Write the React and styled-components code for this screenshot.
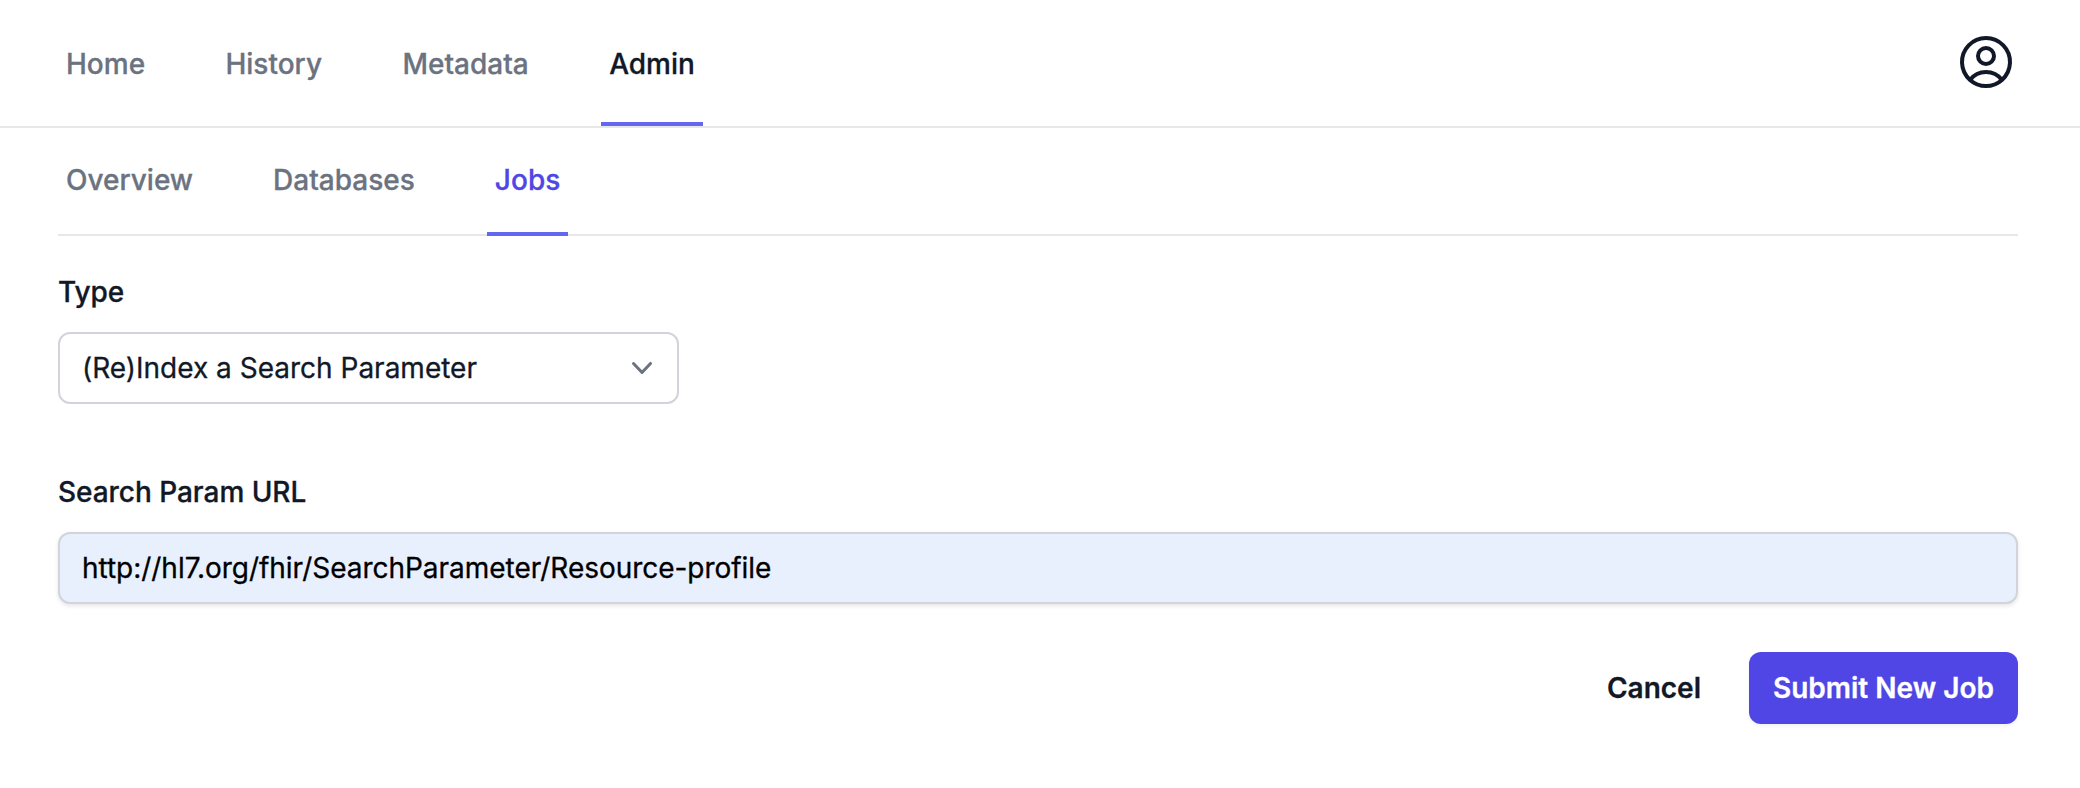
import React from "react";
import styled, { createGlobalStyle } from "styled-components";

const GlobalStyle = createGlobalStyle`
  *, *::before, *::after { box-sizing: border-box; }
  body {
    margin: 0;
    background: #fff;
    color: #111827;
    font-family: Inter, "Liberation Sans", sans-serif;
    font-size: 28px;
    line-height: 48px;
    -webkit-font-smoothing: antialiased;
    -webkit-text-stroke: 0.3px currentColor;
  }
`;

const Page = styled.div`
  min-height: 788px;
`;

const Header = styled.header`
  display: flex;
  justify-content: space-between;
  height: 128px;
  padding: 0 62px 0 58px;
  border-bottom: 2px solid #e5e7eb;
`;

const TabList = styled.nav`
  display: flex;
  gap: ${(p) => p.$gap || "64px"};
`;

const Tab = styled.a`
  display: flex;
  align-items: center;
  padding: 6px 8px 0;
  border-bottom: 4px solid ${(p) => (p.$active ? "#6366f1" : "transparent")};
  color: ${(p) => (p.$active ? "#111827" : "#6b7280")};
  font-weight: 500;
  line-height: 40px;
  white-space: nowrap;
  text-decoration: none;
`;

const ProfileButton = styled.button`
  align-self: flex-start;
  display: flex;
  margin: 30px 0 0;
  padding: 0;
  border: 0;
  background: none;
  color: #111827;
`;

const Main = styled.main`
  padding: 0 62px 0 58px;
`;

const SubTabList = styled(TabList)`
  height: 108px;
  box-shadow: inset 0 -2px 0 #e5e7eb;
`;

const SubTab = styled(Tab)`
  padding: 32px 8px;
  color: ${(p) => (p.$active ? "#4f46e5" : "#6b7280")};
`;

const Form = styled.form`
  display: flex;
  flex-direction: column;
  gap: 64px;
  padding-top: 32px;
`;

const Field = styled.div`
  display: flex;
  flex-direction: column;
  align-items: flex-start;
  gap: 16px;
`;

const Label = styled.label`
  font-weight: 500;
  letter-spacing: -0.04px;
`;

const SelectButton = styled.button`
  display: flex;
  align-items: center;
  justify-content: space-between;
  width: 621px;
  height: 72px;
  padding: 0 15px 0 22px;
  border: 2px solid #d1d5db;
  border-radius: 12px;
  background: #fff;
  color: #111827;
  font: inherit;
  text-align: left;
`;

const TextInput = styled.input`
  width: 100%;
  height: 72px;
  padding: 0 22px;
  border: 2px solid #d1d5db;
  border-radius: 12px;
  background: #e8f0fe;
  box-shadow: 0 2px 4px rgba(0, 0, 0, 0.1);
  color: #000;
  font: inherit;
  letter-spacing: -0.03px;
  outline: none;
`;

const Actions = styled.div`
  display: flex;
  justify-content: flex-end;
  align-items: center;
  gap: 48px;
  margin-top: -16px;
`;

const Button = styled.button`
  height: 72px;
  padding: ${(p) => (p.$primary ? "0 24px" : "0")};
  border: 0;
  border-radius: 12px;
  background: ${(p) => (p.$primary ? "#4f46e5" : "transparent")};
  box-shadow: ${(p) => (p.$primary ? "0 2px 4px rgba(0, 0, 0, 0.05)" : "none")};
  color: ${(p) => (p.$primary ? "#fff" : "#111827")};
  font: inherit;
  font-weight: 600;
  white-space: nowrap;
`;

const UserCircleIcon = () => (
  <svg width="64" height="64" viewBox="0 0 24 24" fill="none" stroke="currentColor" strokeWidth="1.5" strokeLinecap="round" strokeLinejoin="round">
    <path d="M17.982 18.725A7.488 7.488 0 0012 15.75a7.488 7.488 0 00-5.982 2.975m11.963 0a9 9 0 10-11.963 0m11.963 0A8.966 8.966 0 0112 21a8.966 8.966 0 01-5.982-2.275M15 9.75a3 3 0 11-6 0 3 3 0 016 0z" />
  </svg>
);

const ChevronDownIcon = () => (
  <svg width="40" height="40" viewBox="0 0 20 20" fill="#6b7280">
    <path fillRule="evenodd" clipRule="evenodd" d="M5.23 7.21a.75.75 0 011.06.02L10 11.168l3.71-3.938a.75.75 0 111.08 1.04l-4.25 4.5a.75.75 0 01-1.08 0l-4.25-4.5a.75.75 0 01.02-1.06z" />
  </svg>
);

export default function App() {
  return (
    <Page>
      <GlobalStyle />
      <Header>
        <TabList $gap="64.4px">
          {["Home", "History", "Metadata", "Admin"].map((name) => (
            <Tab key={name} $active={name === "Admin"}>{name}</Tab>
          ))}
        </TabList>
        <ProfileButton type="button" aria-label="Profile">
          <UserCircleIcon />
        </ProfileButton>
      </Header>
      <Main>
        <SubTabList>
          {["Overview", "Databases", "Jobs"].map((name) => (
            <SubTab key={name} $active={name === "Jobs"}>{name}</SubTab>
          ))}
        </SubTabList>
        <Form>
          <Field>
            <Label>Type</Label>
            <SelectButton type="button">
              <span>(Re)Index a Search Parameter</span>
              <ChevronDownIcon />
            </SelectButton>
          </Field>
          <Field>
            <Label htmlFor="url">Search Param URL</Label>
            <TextInput id="url" spellCheck={false} defaultValue="http://hl7.org/fhir/SearchParameter/Resource-profile" />
          </Field>
          <Actions>
            <Button type="button">Cancel</Button>
            <Button type="button" $primary>Submit New Job</Button>
          </Actions>
        </Form>
      </Main>
    </Page>
  );
}
